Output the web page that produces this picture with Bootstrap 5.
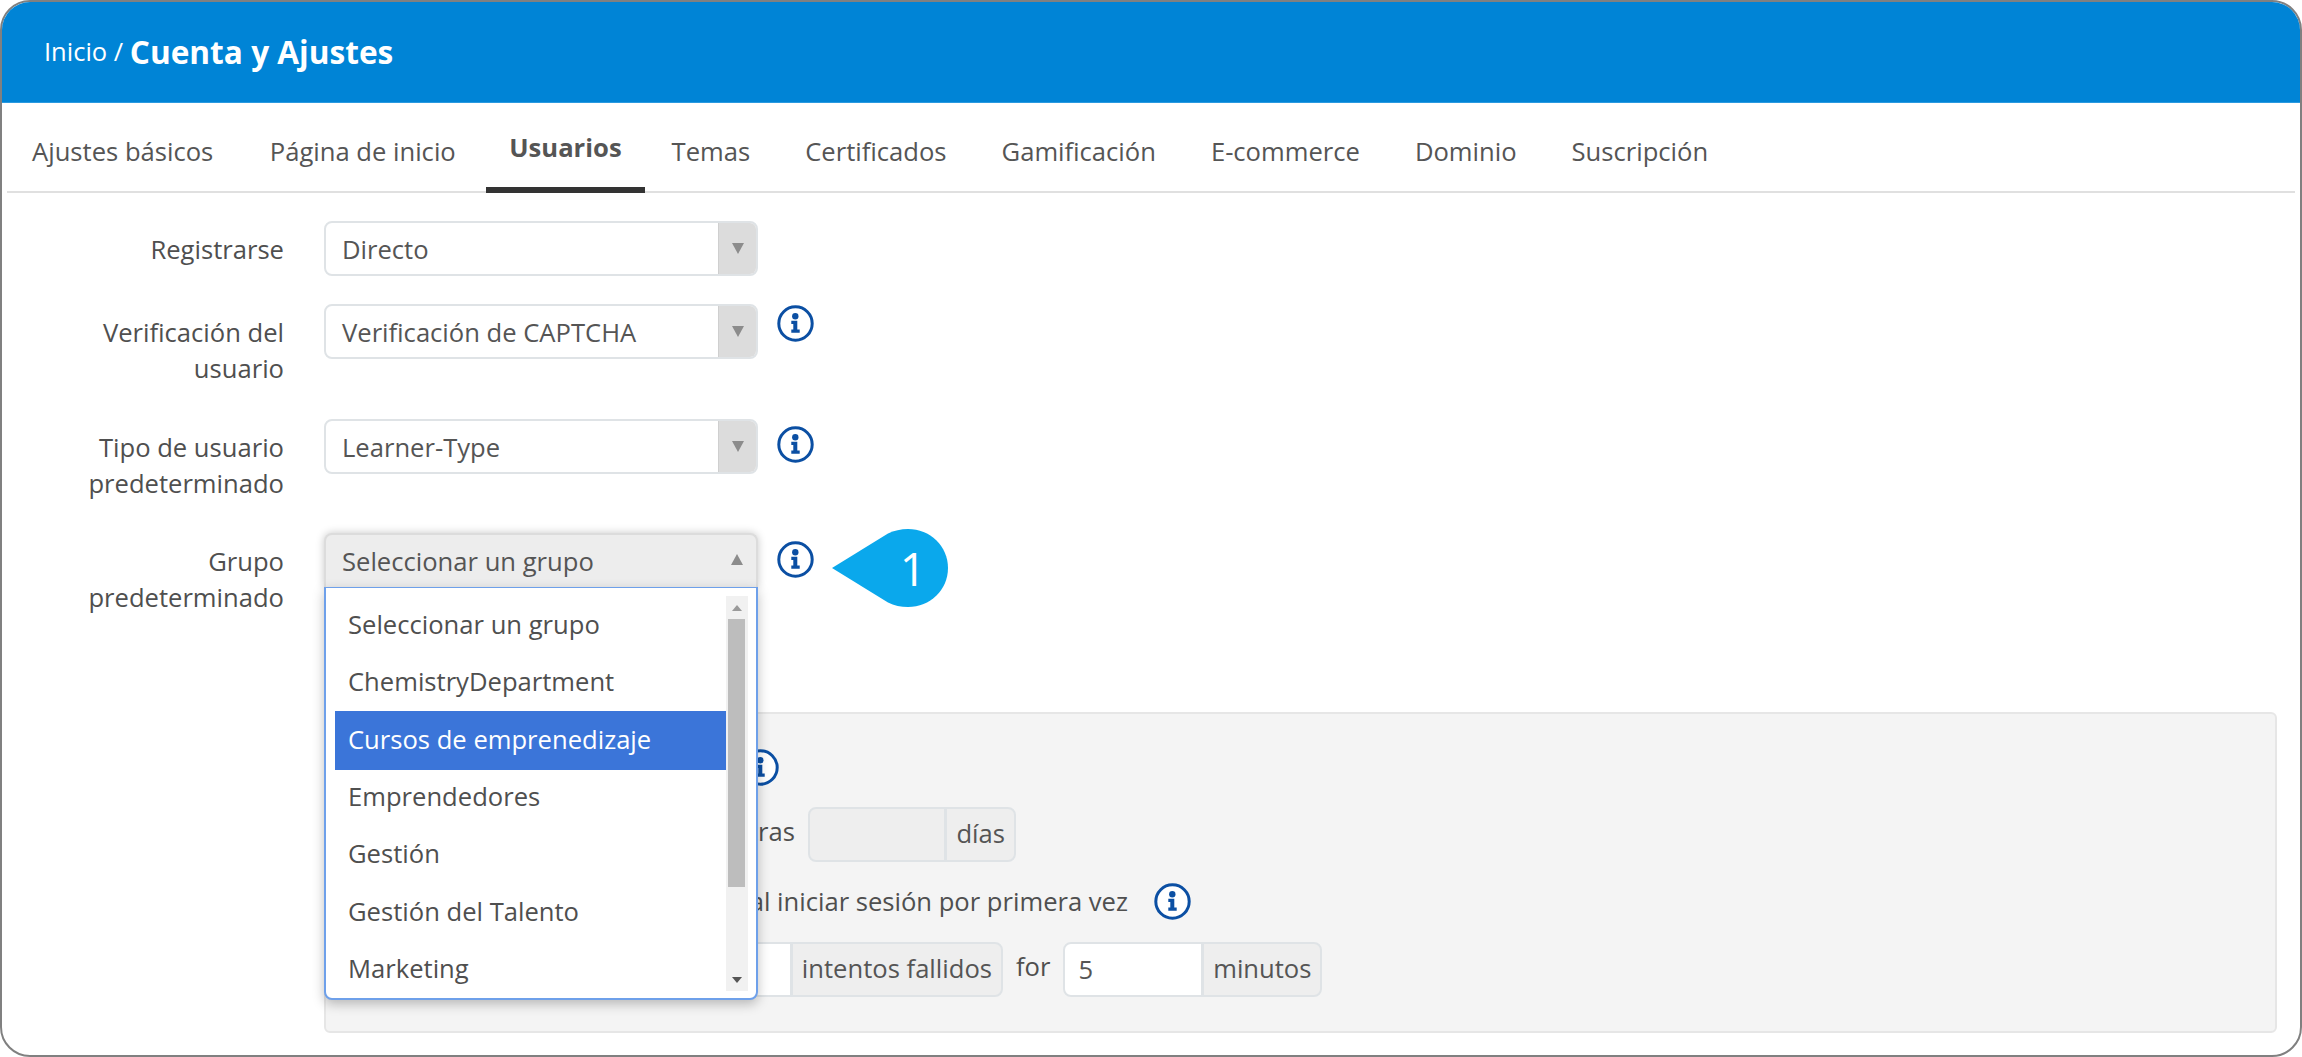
<!DOCTYPE html>
<html lang="es">
<head>
<meta charset="utf-8">
<title>Cuenta y Ajustes</title>
<link href="https://cdn.jsdelivr.net/npm/bootstrap@5.3.0/dist/css/bootstrap.min.css" rel="stylesheet">
<style>
html,body{margin:0;background:#fff;overflow:hidden}
body{font-family:"Open Sans",sans-serif;font-size:25.6px;color:#4f4f4f}
.shell{height:1057px;border:2px solid #808080;border-radius:30px;overflow:hidden;background:#fff}
.topbar{height:101px;background:#0084d6;border-bottom:1px solid #2a9ae0;color:#fff;padding:0 0 1px 42px;font-size:25.5px}
.topbar b{font-size:31.6px;font-weight:700}
.tabs{height:90px;margin:0 5px;border-bottom:2px solid #e0e0e0;flex-wrap:nowrap}
.tabs .nav-link{color:#555;padding:0 27.5px;font-size:25.6px;height:88px;line-height:97px;white-space:nowrap}
.tabs .nav-item:first-child .nav-link{padding-left:25px;padding-right:29px}
.tabs .nav-link.on{font-weight:700;padding:0 23px;line-height:89px;margin:0 -.5px 0 3px;border-bottom:6px solid #333;height:90px}
.formrow{display:flex;align-items:flex-start}
.rowa{height:83px;margin-top:28px}
.rowb{height:115px}
.rowc{height:114px}
.rowd{height:179px}
.flabel{width:282px;padding:11px 0 0 40px;text-align:right;line-height:36px;flex:none;color:#4f4f4f}
.pickwrap{position:relative;margin-left:40px;width:434px;flex:none}
.pick{height:55px;border:2px solid #dfe3e6;border-radius:8px;display:flex;align-items:stretch;background:#fff;overflow:hidden}
.pick span.val{flex:1;padding:0 0 0 16px;line-height:53px;color:#555}
.pick .arrowbox{width:38px;background:#dcdcdc;border-left:1px solid #cfcfcf;display:flex;align-items:center;justify-content:center}
.tri-d{width:0;height:0;border-left:6px solid transparent;border-right:6px solid transparent;border-top:11px solid #8c8c8c}
.tri-u{width:0;height:0;border-left:6px solid transparent;border-right:6px solid transparent;border-bottom:11px solid #8c8c8c}
.pick.open{background:#ededed;border-radius:8px 8px 0 0;border-color:#dcdcdc;border-bottom:0;box-shadow:0 0 8px rgba(0,0,0,.22);height:54px;overflow:visible}
.pick.open span.val{line-height:54px}
.pick.open .arrowbox{background:transparent;border:0;padding-bottom:4px;width:38px}
.infoic{width:37px;height:37px;flex:none;margin-left:19px}
.t1{margin-top:1px}.t7{margin-top:7px}.t8{margin-top:8px}
.menuopen{position:absolute;left:0;right:0;top:54px;height:413px;background:#fff;border:2px solid #6ea0ea;border-top-width:1px;border-radius:0 0 8px 8px;box-shadow:0 4px 12px rgba(0,0,0,.25);z-index:5;padding:8px 8px 8px 9px;display:flex}
.menuopen .list-group{flex:1;border-radius:0}
.menuopen .list-group-item{flex:none;border:0;padding:0 0 0 13px;height:57.3px;line-height:57px;color:#4f4f4f;font-size:25.6px;border-radius:0;background:transparent}
.menuopen .list-group-item.active{background:#3b75d9;color:#fff;height:59px;margin-bottom:-1.7px;margin-top:0}
.sbar{width:22px;height:395px;background:#f1f1f1;position:relative;flex:none}
.sbar .thumb{position:absolute;left:2px;right:3px;top:23px;height:268px;background:#bdbdbd}
.sbar .up{position:absolute;top:9px;left:6px;width:0;height:0;border-left:5px solid transparent;border-right:5px solid transparent;border-bottom:6px solid #9a9a9a}
.sbar .down{position:absolute;bottom:8px;left:6px;width:0;height:0;border-left:5px solid transparent;border-right:5px solid transparent;border-top:6px solid #555}
.callout{position:relative;width:118px;height:78px;margin-left:16px;margin-top:-4px;flex:none}
.callout svg{display:block}
.callout span{position:absolute;left:67px;top:0;width:32px;text-align:center;color:#fff;font-size:46px;line-height:78px;font-weight:400}
.panelbox{margin:0 23px 0 322px;height:321px;background:#f4f4f4;border:2px solid #e6e6e6;border-radius:6px;position:relative}
.prow{display:flex;align-items:flex-start;white-space:nowrap}
.pr1{height:93px;padding:35px 0 0 416px}
.pr1 .infoic{margin-left:0}
.pr2{height:76px}
.pr2 .lbl{width:469px;text-align:right;flex:none;margin-right:13px;margin-top:6px}
.pr3{height:59px}
.pr3 .lbl{width:802px;text-align:right;flex:none}
.pr3 .infoic{margin-left:26px}
.pr4 .input-group{flex:none;flex-wrap:nowrap}
.grpa{width:422px;margin-left:255px}
.grpb{width:259px}
.grpd{width:208px}
.input-group{height:55px}
.input-group .form-control{height:55px;border:2px solid #dfe3e6;border-radius:8px;font-size:25.6px;color:#555;padding:0 13px;box-shadow:none;background:#fff}
.input-group .form-control:disabled{background:#eee}
.input-group-text{height:55px;border:2px solid #dfe3e6;background:#eee;border-radius:8px;font-size:25.6px;color:#555;padding:0 9px}
.lbl-for{margin:0 13px;line-height:50px}
</style>
</head>
<body>
<svg width="0" height="0" class="d-block position-absolute"><defs>
<symbol id="ic" viewBox="0 0 37 37"><circle cx="18.5" cy="18.5" r="16.7" fill="#fff" stroke="#0b4fa3" stroke-width="3"/><circle cx="18.3" cy="11.2" r="3.2" fill="#0b4fa3"/><path fill="#0b4fa3" d="M14.3 15.7h6v8.8h2.4v3.2h-8.4v-3.2h2v-5.6h-2z"/></symbol>
</defs></svg>
<div class="shell">
  <div class="topbar d-flex align-items-center">Inicio /&nbsp;<b>Cuenta y Ajustes</b></div>
  <ul class="nav tabs">
    <li class="nav-item"><a class="nav-link" href="#">Ajustes básicos</a></li>
    <li class="nav-item"><a class="nav-link" href="#">Página de inicio</a></li>
    <li class="nav-item"><a class="nav-link on" href="#">Usuarios</a></li>
    <li class="nav-item"><a class="nav-link" href="#">Temas</a></li>
    <li class="nav-item"><a class="nav-link" href="#">Certificados</a></li>
    <li class="nav-item"><a class="nav-link" href="#">Gamificación</a></li>
    <li class="nav-item"><a class="nav-link" href="#">E-commerce</a></li>
    <li class="nav-item"><a class="nav-link" href="#">Dominio</a></li>
    <li class="nav-item"><a class="nav-link" href="#">Suscripción</a></li>
  </ul>

  <div class="formrow rowa">
    <div class="flabel">Registrarse</div>
    <div class="pickwrap"><div class="pick"><span class="val">Directo</span><span class="arrowbox"><i class="tri-d"></i></span></div></div>
  </div>
  <div class="formrow rowb">
    <div class="flabel">Verificación del usuario</div>
    <div class="pickwrap"><div class="pick"><span class="val">Verificación de CAPTCHA</span><span class="arrowbox"><i class="tri-d"></i></span></div></div>
    <svg class="infoic t1"><use href="#ic"/></svg>
  </div>
  <div class="formrow rowc">
    <div class="flabel">Tipo de usuario predeterminado</div>
    <div class="pickwrap"><div class="pick"><span class="val">Learner-Type</span><span class="arrowbox"><i class="tri-d"></i></span></div></div>
    <svg class="infoic t7"><use href="#ic"/></svg>
  </div>
  <div class="formrow rowd">
    <div class="flabel">Grupo predeterminado</div>
    <div class="pickwrap">
      <div class="pick open"><span class="val">Seleccionar un grupo</span><span class="arrowbox"><i class="tri-u"></i></span></div>
      <div class="menuopen">
        <div class="list-group">
          <div class="list-group-item">Seleccionar un grupo</div>
          <div class="list-group-item">ChemistryDepartment</div>
          <div class="list-group-item active">Cursos de emprenedizaje</div>
          <div class="list-group-item">Emprendedores</div>
          <div class="list-group-item">Gestión</div>
          <div class="list-group-item">Gestión del Talento</div>
          <div class="list-group-item">Marketing</div>
        </div>
        <div class="sbar"><i class="up"></i><i class="thumb"></i><i class="down"></i></div>
      </div>
    </div>
    <svg class="infoic t8"><use href="#ic"/></svg>
    <div class="callout">
      <svg width="118" height="78" viewBox="0 0 118 78"><path fill="#0aa8ec" d="M2 39 L58 4.5 C64 1.5 71 0 78 0 C100 0 118 17 118 39 C118 61 100 78 78 78 C71 78 64 76.5 58 73.5 Z"/></svg>
      <span>1</span>
    </div>
  </div>

  <div class="panelbox">
    <div class="prow pr1"><svg class="infoic"><use href="#ic"/></svg></div>
    <div class="prow pr2">
      <div class="lbl">tras</div>
      <div class="input-group grpd"><input class="form-control" disabled aria-label="días"><span class="input-group-text">días</span></div>
    </div>
    <div class="prow pr3">
      <div class="lbl">al iniciar sesión por primera vez</div>
      <svg class="infoic"><use href="#ic"/></svg>
    </div>
    <div class="prow pr4">
      <div class="input-group grpa"><input class="form-control" aria-label="intentos"><span class="input-group-text">intentos fallidos</span></div>
      <div class="lbl-for">for</div>
      <div class="input-group grpb"><input class="form-control" value="5" aria-label="minutos"><span class="input-group-text">minutos</span></div>
    </div>
  </div>
</div>
<script src="https://cdn.jsdelivr.net/npm/bootstrap@5.3.0/dist/js/bootstrap.bundle.min.js"></script>
</body>
</html>
